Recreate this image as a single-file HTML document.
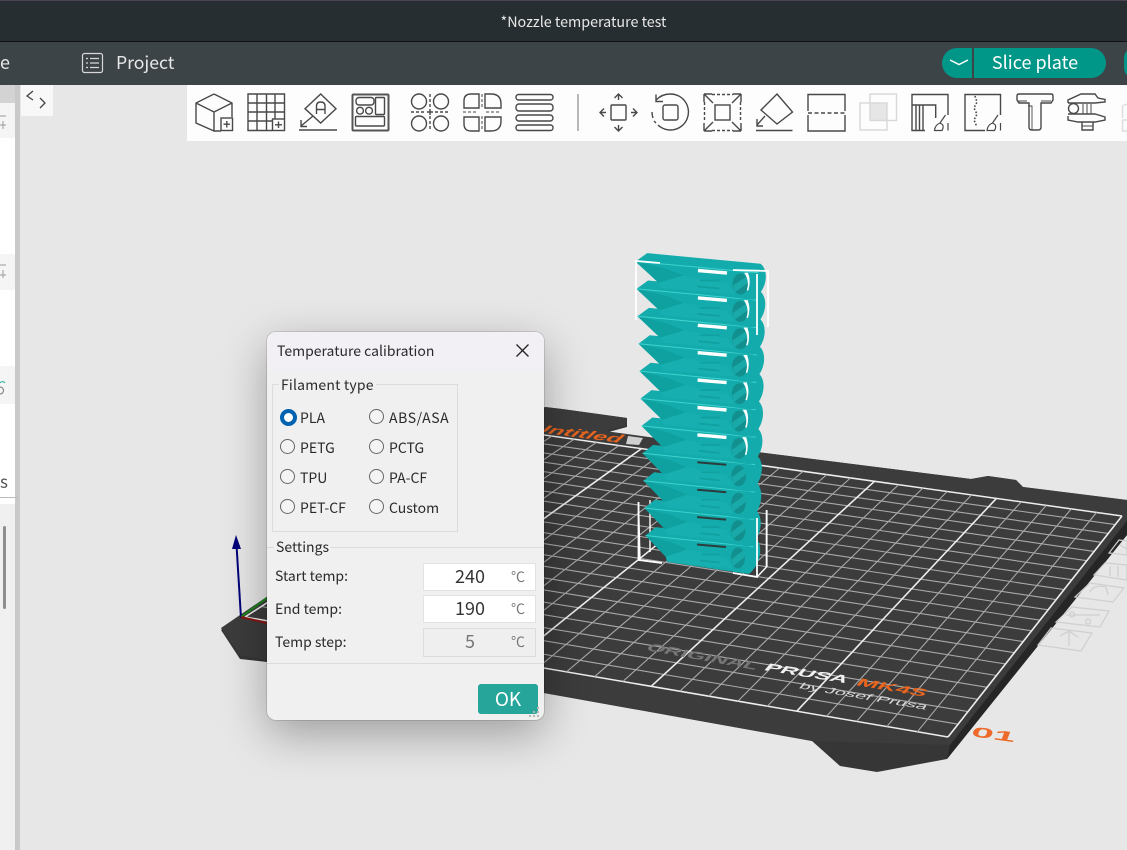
<!DOCTYPE html>
<html><head><meta charset="utf-8"><title>Nozzle temperature test</title>
<style>
html,body{margin:0;padding:0;width:1127px;height:850px;overflow:hidden;background:#e7e7e7}
body{position:relative;font-family:"Noto Sans CJK SC","Liberation Sans",sans-serif;color:#222}
.a{position:absolute}
.t{position:absolute;white-space:nowrap;line-height:20px;height:20px}
.d{font-size:14px;color:#2a2a2a;margin-top:.5px}
.r{position:absolute;width:13px;height:13px;border:1.3px solid #666;border-radius:50%;background:#f4f4f4}
.i{position:absolute;left:423px;width:113px;height:28px;background:#fff;border:1px solid #e2e2e2;box-sizing:border-box}
.v{position:absolute;left:19px;width:54px;text-align:center;top:1px;font-size:18px;line-height:22px;color:#333}
.c{position:absolute;left:87px;top:3px;font-size:14px;line-height:20px;color:#777}
</style></head><body>
<svg class="a" id="scene" style="left:0;top:0" width="1127" height="850" viewBox="0 0 1127 850">
<defs>
<g id="seg">
<path d="M0 0L11.700-8.400L125 2.300C133 8 133 27 118 38.300L115 38.300L25 26.500L23 21.300Z" fill="#13abab"/>
<path d="M0 0L23 21.300L48 14L30 7Z" fill="#0fa0a0"/>
<path d="M23 21.300L48 14L92 22L100 33L25 26.500Z" fill="#17afaf"/>
<path d="M0 0L123 11.300" stroke="#3fd2ce" stroke-width="1" fill="none"/>
<ellipse cx="105" cy="22.500" rx="8" ry="10.500" fill="#12908f"/>
<path d="M97.500 24L112.500 14V21.500L99 31Z" fill="#19a9a9"/>
<path d="M64 19H84M62 25L84 27" stroke="#10a0a0" stroke-width="1.700" fill="none"/>
</g>
</defs>
<path d="M221 630L545 407L562 409L627 418L627 427L605 433L765 453L971 479L988 476L1016 480L1023 487L1127 500L1127 535L947 759L877 772L840 766L812 741L544 693L267 662L240 659Z" fill="#363636"/>
<path d="M221 628L545 407L562 409L627 418L627 425L605 431L765 453L971 479L988 476L1016 480L1023 487L1127 500L1127 521L950 745L812 741L544 693L267 660L240 655Z" fill="#3c3c3c"/>
<path d="M1127 521L950 745L947 759L1127 535Z" fill="#262626"/>
<g id="grid" style="filter:blur(.35px)"></g>
<g font-family="Liberation Sans,sans-serif" font-weight="700" style="filter:blur(.3px)">
<text transform="matrix(1,.18,-.6,.7,645,650)" font-size="14" fill="#777" textLength="110" lengthAdjust="spacingAndGlyphs">ORIGINAL</text>
<text transform="matrix(1,.16,-.6,.7,763,670)" font-size="14" fill="#f2f2f2" textLength="82" lengthAdjust="spacingAndGlyphs">PRUSA</text>
<text transform="matrix(1,.17,-.6,.7,855,685)" font-size="14" fill="#e8651f" textLength="69" lengthAdjust="spacingAndGlyphs">MK4S</text>
<text transform="matrix(1,.17,-.6,.7,798,688)" font-size="11" fill="#ddd" font-weight="400" textLength="127" lengthAdjust="spacingAndGlyphs">by Josef Prusa</text>
<text transform="matrix(1,.13,-.5,.8,530,431)" font-size="14" fill="#e8651f" font-style="italic" textLength="90" lengthAdjust="spacingAndGlyphs">Untitled</text>
<text transform="matrix(1,.14,-.3,.8,970,736)" font-size="17" fill="#ee6a2a" textLength="44" lengthAdjust="spacingAndGlyphs">01</text>
</g>
<path d="M628 436l15 2-4 7-13-1z" fill="#cfcfcf"/>
<g fill="none" stroke="#cfcfcf" stroke-width="1.200">
<path d="M1051 628L1092 633L1081 651L1038 645ZM1069 631V646M1060 636L1069 631L1078 637"/>
<path d="M1072 607L1109 611L1100 627L1056 622ZM1066 615H1100M1072 612a2.500 2.500 0 1 0 .1 0M1088 619a2.500 2.500 0 1 0 .1 0"/>
<path d="M1090 583L1124 588L1113 602L1075 597ZM1090 592q4-8 16-5l2 8"/>
<path d="M1105 563L1127 565V580L1094 575ZM1110 566V576M1118 566V577"/>
<path d="M1119 540L1127 541V555L1109 553ZM1120 545l7 4"/>
</g>
<g fill="none" stroke-width="2"><path d="M241 618L236.500 545" stroke="#00007a"/><path d="M241 617L267 598" stroke="#1a8a1a"/><path d="M241 617L267 623" stroke="#8a1414"/></g>
<path d="M236 535L232 549L241 549Z" fill="#00007a"/>
<g fill="none" stroke="#fff" stroke-width="1.400">
<path d="M650 500V552"/>
<path d="M638.500 502L640 560L662 563M766.500 510V567L757 577"/>
</g>
<g id="tower"></g>
<g fill="none" stroke="#fff" stroke-width="1.800">
<path d="M636 320V261L660 263"/>
<path d="M733 270L768 271V327"/>
<path d="M757 274V335"/>
<path d="M757 518V577L733 573"/>
<path d="M638.500 502V560L662 563"/>
<path d="M766.700 510V567"/>
</g>
<g id="wh" stroke="#fff" stroke-width="3.400"></g>
</svg>

<!-- left panel -->
<div class="a" style="left:0;top:85px;width:15px;height:765px;background:#fff"></div>
<div class="a" style="left:15px;top:85px;width:5px;height:765px;background:#c9c9c9"></div>
<div class="a" style="left:0;top:85px;width:15px;height:18px;background:#d3d3d3"></div>
<div class="a" style="left:0;top:103px;width:15px;height:35px;background:#f5f5f5"></div>
<div class="a" style="left:0;top:254px;width:15px;height:36px;background:#f5f5f5"></div>
<div class="a" style="left:0;top:366px;width:15px;height:38px;background:#f5f5f5"></div>
<div class="a" style="left:0;top:497px;width:18px;height:1px;background:#bbb"></div>
<div class="a" style="left:0;top:504px;width:15px;height:346px;background:#f0f0f0"></div>
<div class="a" style="left:3px;top:526px;width:3px;height:83px;background:#8e8e8e;border-radius:2px"></div>
<div class="t" style="left:0;top:471px;font-size:17px;color:#555">s</div>
<svg class="a" style="left:0;top:105px" width="15" height="300" fill="none" stroke="#999" stroke-width="1"><path d="M0 11H6M0 20H6M3 16V24M0 160H6M0 170H6M3 165V173"/><path d="M0 278a3 3 0 0 1 5 0" stroke="#26a69a"/><path d="M0 282a3 3 0 1 1 0 7" stroke="#777"/></svg>

<!-- top bars -->
<div class="a" style="left:0;top:0;width:1127px;height:41px;background:#272e31;border-top:1px solid #4a4555;box-sizing:border-box"></div>
<div class="a" style="left:0;top:41px;width:1127px;height:1px;background:#111"></div>
<div class="a" style="left:0;top:42px;width:1127px;height:43px;background:#3c4447"></div>
<div class="t" style="left:0;width:1167px;top:12px;text-align:center;font-size:14.300px;color:#e8e8e8">*Nozzle temperature test</div>
<div class="t" style="left:0;top:52px;font-size:18px;color:#e8e8e8">e</div>
<div class="t" style="left:116px;top:53px;font-size:17.600px;color:#e8e8e8">Project</div>
<svg class="a" style="left:81px;top:52px" width="24" height="22" fill="none" stroke="#d8d8d8" stroke-width="1.200"><rect x="1.500" y="1.500" width="20" height="19" rx="2"/><path d="M9 6.500H18M9 11H18M9 15.500H18M5 6.500H7M5 11H7M5 15.500H7"/></svg>
<div class="a" style="left:941.500px;top:48px;width:30px;height:30px;background:#009688;border-radius:15px 0 0 15px"></div>
<div class="a" style="left:974px;top:48px;width:132px;height:30px;background:#009688;border-radius:0 15px 15px 0"></div>
<svg class="a" style="left:948px;top:57px" width="22" height="12" fill="none" stroke="#fff" stroke-width="1.500"><path d="M2 3L11 7.500L20 3"/></svg>
<div class="t" style="left:974px;width:122px;top:52px;text-align:center;font-size:18px;color:#fff">Slice plate</div>
<div class="a" style="left:1124px;top:48px;width:10px;height:30px;background:#009688;border-radius:15px 0 0 15px"></div>

<!-- collapse + toolbar -->
<div class="a" style="left:21px;top:85px;width:32px;height:31px;background:#f8f8f8"></div>
<svg class="a" style="left:21px;top:85px" width="32" height="31" fill="none" stroke="#444" stroke-width="1.300"><path d="M12 6L6 11L12 15M19 13L24 18L19 23"/></svg>
<div class="a" style="left:187px;top:85px;width:940px;height:56px;background:#fdfdfd"></div>
<svg class="a" style="left:0;top:0" width="1127" height="145" fill="none" stroke="#484848" stroke-width="1.400">
<!-- cube -->
<path d="M214 94L232 103V117M214 94L196 103V123L214 131M196 103L214 112L232 103M214 112V131H221"/><rect x="221" y="118" width="11.500" height="12.500"/><path d="M223.500 124.200H230M226.800 121V127.500"/>
<!-- grid -->
<path d="M272 130.500H248V94H284.500V119M257 94V130M266.500 94V130M275 94V119M248 103H284.500M248 112H284.500M248 121H272"/><rect x="272.500" y="119" width="12" height="11.500"/><path d="M275 124.800H282M278.500 121.500V128"/>
<!-- A diamond -->
<path d="M320.700 94L336 108.700L320.700 123L305 108.700ZM299 130H337M313 116L301 126M301 120V126.500H307"/>
<path d="M316.500 114V106Q316.500 102 320.700 102Q325 102 325 106V114M316.500 109.500H325"/>
<!-- arrange -->
<rect x="352.500" y="94.500" width="36" height="36" rx="1" stroke-width="2" stroke="#555"/><rect x="356" y="97.500" width="18" height="7.500" rx="3"/><rect x="375.500" y="97.500" width="9" height="17" rx="1"/><circle cx="360" cy="110.700" r="3.400"/><circle cx="369" cy="110.700" r="3.400"/><rect x="355.500" y="116.500" width="29" height="9.500" rx="1"/>
<!-- circles -->
<circle cx="419" cy="101.500" r="7.500"/><circle cx="441" cy="101.500" r="7.500"/><circle cx="419" cy="123.500" r="7.500"/><circle cx="441" cy="123.500" r="7.500"/><path d="M430 94V108M430 116V131M411 112H425M435 112H449" stroke-dasharray="3 2"/><path d="M427 112H433M430 109V115"/>
<!-- quarter -->
<path d="M479 94V108H464V101Q464 94 471 94ZM485 94H491Q501 94 501 104V108H485ZM464 117H479V131H471Q464 131 464 124ZM485 117H501V121Q501 131 491 131H485Z"/><path d="M482 94V108M482 116V131M463 112H478M486 112H501" stroke-dasharray="3 2" stroke-width="1"/>
<!-- layers -->
<rect x="516" y="94.500" width="37" height="5.500" rx="2.500"/><rect x="516" y="104" width="37" height="7" rx="3"/><rect x="516" y="115" width="37" height="6" rx="3"/><rect x="516" y="125" width="37" height="5.500" rx="2.500"/>
<path d="M578 94V131" stroke="#9a9a9a"/>
<!-- move -->
<rect x="611" y="105" width="15" height="15" rx="1"/><path d="M618.500 100V94M614.500 98L618.500 94L622.500 98M618.500 125V131M614.500 127L618.500 131L622.500 127M606 112.500H600M604 108.500L600 112.500L604 116.500M631 112.500H637M633 108.500L637 112.500L633 116.500"/>
<!-- rotate -->
<path d="M656 100Q662 94 670 94A18 18 0 1 1 658 125M652 112Q652 115 653 118M654 121L656 123M656 94.500V101.500H663"/><rect x="663" y="105" width="15" height="15" rx="2"/>
<!-- scale -->
<path d="M712 94.500H733M704.500 102V122M740.500 102V122M712 130.500H733" stroke-dasharray="3 2"/><rect x="715" y="105" width="15" height="15"/><path d="M704 94H712M704 94V102M704 94L713 103M741 94H733M741 94V102M741 94L732 103M704 131H712M704 131V123M704 131L713 122M741 131H733M741 131V123M741 131L732 122"/>
<!-- flatten -->
<path d="M777 94L792.500 112L777 124L761 110ZM756 130.500H792.500M765 116L757 125M757 119V126H763"/>
<!-- cut -->
<path d="M808 111V94.500H845V111M808 115V131H845V115"/><path d="M808 113H845" stroke-dasharray="4 2.500"/>
<!-- boolean faded -->
<rect x="870" y="103" width="17" height="17" fill="#e6e6e6" stroke="none"/>
<g stroke="#d8d8d8"><rect x="870" y="94" width="26.500" height="26.500"/><rect x="860" y="103" width="27" height="27"/></g>
<!-- fuzzy skin -->
<path d="M925 130.500H912V94.500H948V115M912 105H935.700V118M916 105V130M919.500 105V130M923 105V130"/><path d="M945.500 115L940 123M940 123Q935 125 934.500 130.500H942Q944 127 942.500 124.500ZM948 123V130.500" stroke-width="1.200"/>
<!-- seam -->
<path d="M985 130.500H965V94.500H1000.500V115"/><path d="M975 96L977 102L974 108L977 114L974 120L977 127" stroke-dasharray="1.600 1.800" stroke-width="1.600"/><path d="M998 115L992.500 123M992.500 123Q987.500 125 987 130.500H994.500Q996.500 127 995 124.500ZM1000.500 123V130.500" stroke-width="1.200"/>
<!-- text T -->
<path d="M1017 96Q1017 94 1019 94H1051Q1053 94 1053 96V100L1051 103H1041V127Q1041 130 1038 130H1032Q1029 130 1029 127V103H1019L1017 100Z"/><path d="M1019 103.500V101H1027M1032 130V106H1028M1041 101H1051" stroke-width=".9"/>
<!-- caliper -->
<path d="M1068 103V100L1081 94H1095L1098 98L1105 99.500V102L1095 103H1068M1068 116V120L1078 122H1095L1105 120V117L1095 114H1068M1082 122V130H1093V122"/><circle cx="1073.500" cy="108.500" r="5"/><path d="M1083 104V114M1087 104V114M1091 104V114M1082 126H1093" stroke-width="1"/>
<!-- faded last -->
<g stroke="#dcdcdc"><path d="M1122.500 106L1127 104M1122.500 106V118M1122.500 120V131H1127M1122.500 120H1127"/></g>
</svg>

<!-- dialog -->
<div class="a" style="left:267px;top:332px;width:277px;height:388px;background:#f0f0f0;border-radius:9px;box-shadow:0 14px 45px rgba(0,0,0,.32),0 0 0 1px rgba(0,0,0,.12)"></div>
<div class="a" style="left:267px;top:332px;width:277px;height:38px;background:#f2f0f5;border-radius:9px 9px 0 0"></div>
<div class="t d" style="left:277px;top:340px">Temperature calibration</div>
<svg class="a" style="left:515px;top:343px" width="15" height="15" fill="none" stroke="#222" stroke-width="1.300"><path d="M1.500 1.500L13.500 13.500M13.500 1.500L1.500 13.500"/></svg>
<div class="a" style="left:272px;top:384px;width:184px;height:146px;border:1px solid #dcdcdc"></div>
<div class="t d" style="left:279px;top:374px;background:#f0f0f0;padding:0 2px;letter-spacing:.2px">Filament type</div>
<div class="r" style="left:280px;top:409px;width:9px;height:9px;border:4px solid #0063b1;background:#fff"></div>
<div class="t d" style="left:300px;top:407px">PLA</div>
<div class="r" style="left:369px;top:409px"></div><div class="t d" style="left:389px;top:407px;letter-spacing:.6px">ABS/ASA</div>
<div class="r" style="left:280px;top:439px"></div><div class="t d" style="left:300px;top:437px">PETG</div>
<div class="r" style="left:369px;top:439px"></div><div class="t d" style="left:389px;top:437px">PCTG</div>
<div class="r" style="left:280px;top:469px"></div><div class="t d" style="left:300px;top:467px">TPU</div>
<div class="r" style="left:369px;top:469px"></div><div class="t d" style="left:389px;top:467px">PA-CF</div>
<div class="r" style="left:280px;top:499px"></div><div class="t d" style="left:300px;top:497px">PET-CF</div>
<div class="r" style="left:369px;top:499px"></div><div class="t d" style="left:389px;top:497px">Custom</div>
<div class="a" style="left:267px;top:547px;width:277px;height:1px;background:#dcdcdc"></div>
<div class="t d" style="left:274px;top:536px;background:#f0f0f0;padding:0 2px">Settings</div>
<div class="t d" style="left:275px;top:565px">Start temp:</div>
<div class="t d" style="left:275px;top:598px">End temp:</div>
<div class="t d" style="left:275px;top:631px">Temp step:</div>
<div class="i" style="top:563px"><div class="v">240</div><div class="c">℃</div></div>
<div class="i" style="top:595px"><div class="v">190</div><div class="c">℃</div></div>
<div class="i" style="top:628px;height:29px;background:#efefef;border-color:#ddd"><div class="v" style="color:#777">5</div><div class="c">℃</div></div>
<div class="a" style="left:267px;top:663px;width:277px;height:1px;background:#dcdcdc"></div>
<div class="a" style="left:478px;top:684px;width:60px;height:30px;background:#26a69a;border-radius:3px;color:#fff;font-size:19px;line-height:30px;text-align:center">OK</div>
<svg class="a" style="left:529px;top:706px" width="13" height="13" fill="#b5b5b5"><rect x="8" y="1" width="2" height="2"/><rect x="4" y="5" width="2" height="2"/><rect x="8" y="5" width="2" height="2"/><rect x="0" y="9" width="2" height="2"/><rect x="4" y="9" width="2" height="2"/><rect x="8" y="9" width="2" height="2"/></svg>

<script>
(function(){
var NS="http://www.w3.org/2000/svg";
var P=[[530,433],[1122,516],[948,737],[245,617]];
var x0=P[0][0],y0=P[0][1],x1=P[1][0],y1=P[1][1],x2=P[2][0],y2=P[2][1],x3=P[3][0],y3=P[3][1];
var dx1=x1-x2,dx2=x3-x2,sx=x0-x1+x2-x3,dy1=y1-y2,dy2=y3-y2,sy=y0-y1+y2-y3;
var det=dx1*dy2-dx2*dy1;
var g=(sx*dy2-dx2*sy)/det,h=(dx1*sy-sx*dy1)/det;
var a=x1-x0+g*x1,b=x3-x0+h*x3,c=x0,d=y1-y0+g*y1,e=y3-y0+h*y3,f=y0;
function M(u,v){var w=g*u+h*v+1;return [(a*u+b*v+c)/w,(d*u+e*v+f)/w];}
var G=document.getElementById("grid");
function L(p,q,col,wd){var l=document.createElementNS(NS,"line");l.setAttribute("x1",p[0].toFixed(1));l.setAttribute("y1",p[1].toFixed(1));l.setAttribute("x2",q[0].toFixed(1));l.setAttribute("y2",q[1].toFixed(1));l.setAttribute("stroke",col);l.setAttribute("stroke-width",wd);G.appendChild(l);}
var i,m;
for(i=0;i<=21;i++){m=(i%21==0);L(M(0,i/21),M(1,i/21),m?"#eee":"#aaa",m?1.5:1.100);}
for(i=0;i<=25;i++){m=(i%5==0);L(M(i/25,0),M(i/25,1),m?"#eee":"#aaa",m?1.600:1.100);}
var T=document.getElementById("tower"),W=document.getElementById("wh");
for(i=10;i>=0;i--){
 var u=document.createElementNS(NS,"use");u.setAttribute("href","#seg");
 var tx=635.5+i*1,ty=261.500+i*27.4,s=1-i*.012;
 u.setAttribute("transform","translate("+tx+" "+ty+") scale("+s+" 1)");
 T.appendChild(u);
 var w=document.createElementNS(NS,"line");
 var lx=698-i*.1,ly=270.5+i*27.4;
 w.setAttribute("x1",lx);w.setAttribute("y1",ly);w.setAttribute("x2",lx+29);w.setAttribute("y2",ly+2.500);
 if(i>6){w.setAttribute("stroke","#2d3b3b");w.setAttribute("stroke-width","2");}
 W.appendChild(w);
 if(i<7){
  var k=document.createElementNS(NS,"path");
  var hx=tx+s*110,hy=ty+12;
  k.setAttribute("d","M"+hx+" "+hy+"q5 8 2 17q3-9 0-17z");
  k.setAttribute("stroke-width","1.500");k.setAttribute("fill","#fff");
  W.appendChild(k);
 }
}
})();
</script>
</body></html>
